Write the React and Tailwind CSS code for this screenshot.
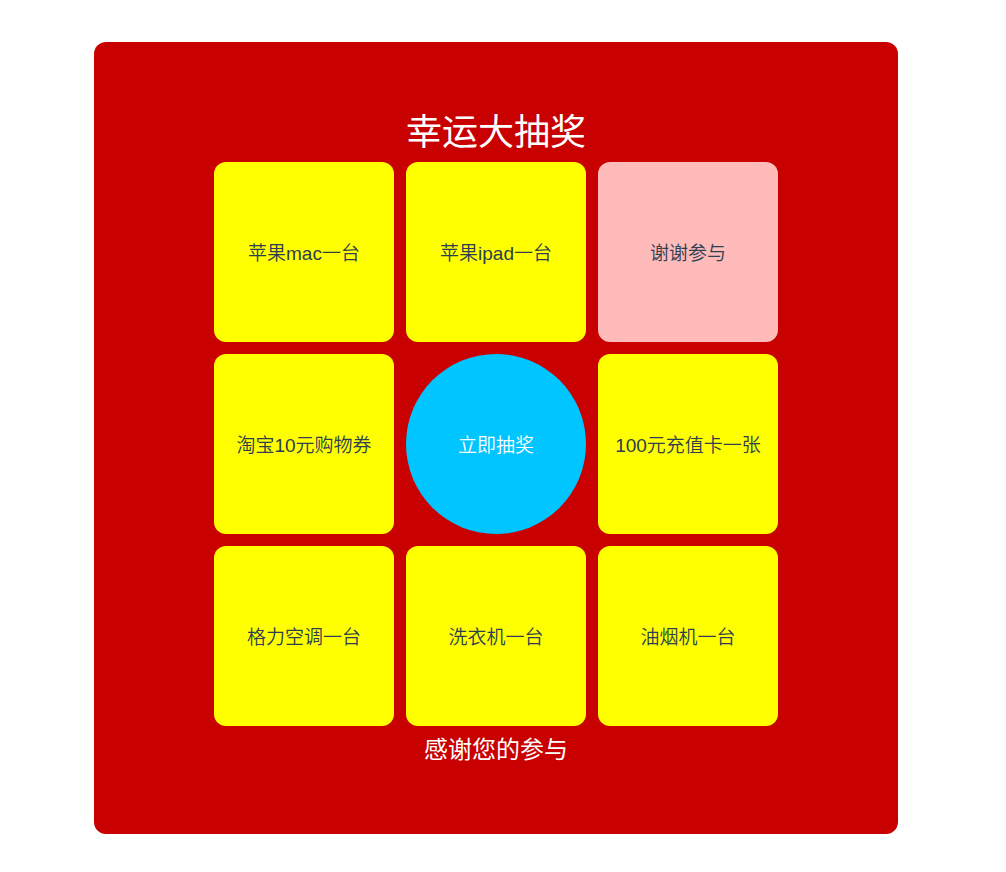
const prizes = [
  { label: "苹果mac一台" },
  { label: "苹果ipad一台" },
  { label: "谢谢参与", active: true },
  { label: "淘宝10元购物券" },
  { label: "立即抽奖", start: true },
  { label: "100元充值卡一张" },
  { label: "格力空调一台" },
  { label: "洗衣机一台" },
  { label: "油烟机一台" },
];

function Cell({ prize }) {
  if (prize.start) {
    return (
      <button type="button" className="aspect-square rounded-full bg-[#00c5ff] pt-1 text-white">
        {prize.label}
      </button>
    );
  }
  return (
    <div
      className={`flex aspect-square items-center justify-center rounded-xl pt-1 text-[#2c3e50] ${
        prize.active ? "bg-[#ffbaba]" : "bg-[#ffff00]"
      }`}
    >
      {prize.label}
    </div>
  );
}

export default function App() {
  return (
    <main className="min-h-screen bg-white pt-[42px] pr-[108px] pb-[38px] pl-[94px] font-['Liberation_Sans','Noto_Sans_CJK_SC',sans-serif]">
      <section className="flex flex-col items-center rounded-xl bg-[#c80000] px-6 pt-[62px] pb-[60px]">
        <h1 className="text-4xl leading-[58px] text-white">幸运大抽奖</h1>
        <div className="grid w-full max-w-[564px] grid-cols-3 gap-3 text-[19px] font-[350]">
          {prizes.map((prize) => (
            <Cell key={prize.label} prize={prize} />
          ))}
        </div>
        <p className="text-2xl leading-[48px] text-white">感谢您的参与</p>
      </section>
    </main>
  );
}
